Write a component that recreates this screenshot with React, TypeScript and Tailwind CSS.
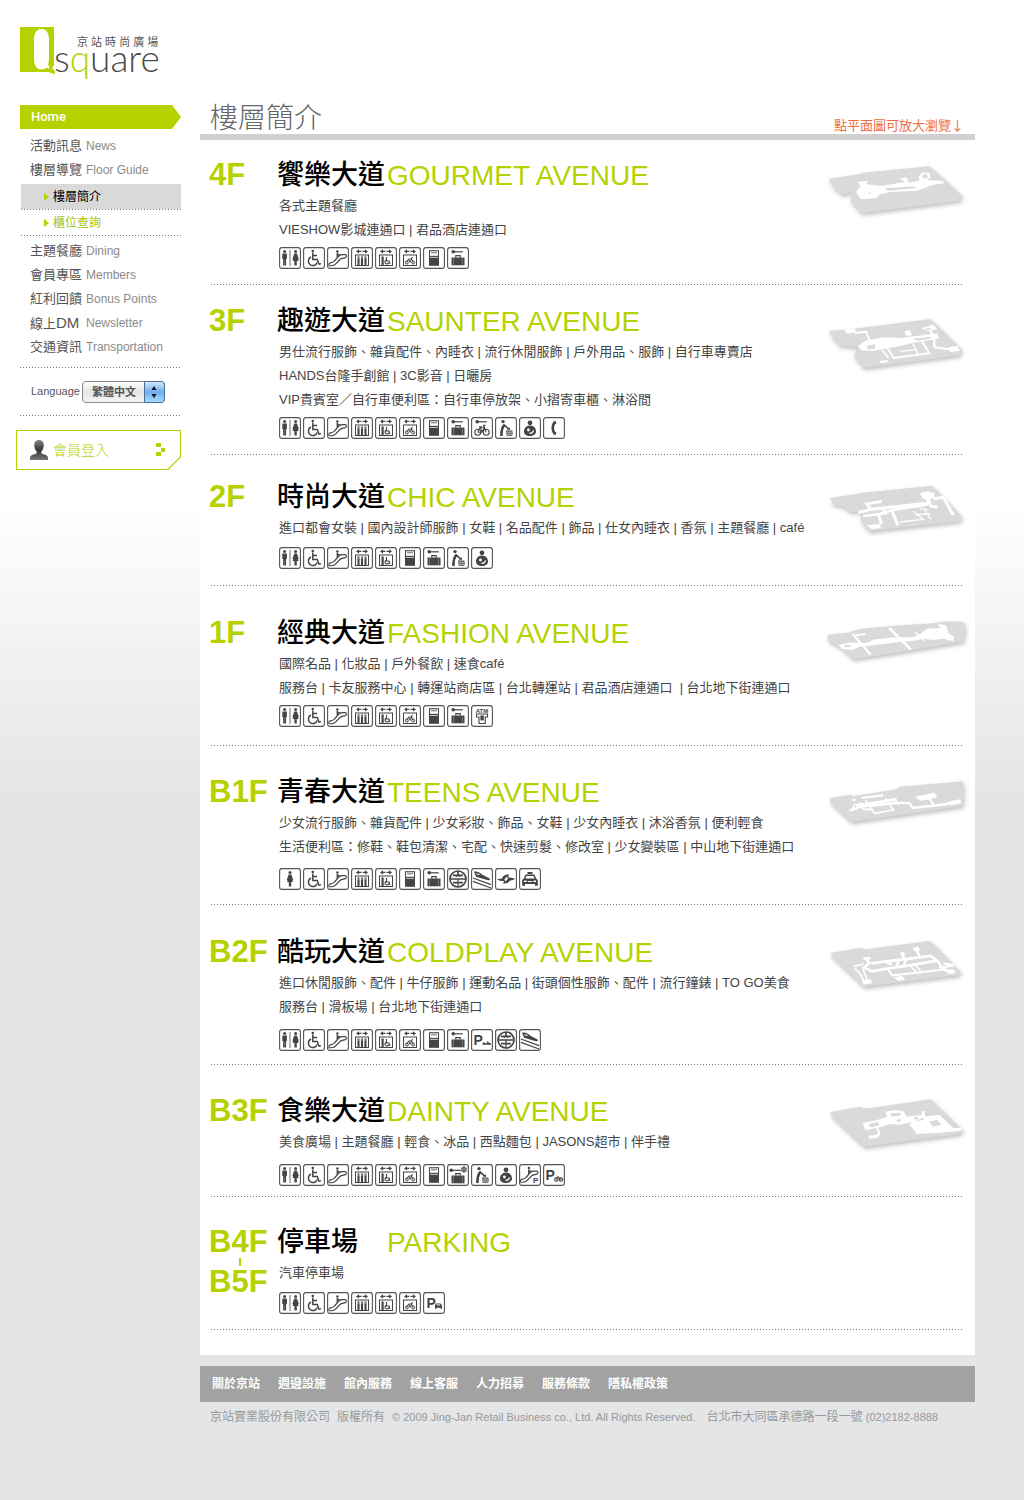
import React from "react";

type IconName =
  | "restroom" | "women" | "wheelchair" | "escalator" | "elevator" | "elevatorAccess" | "elevatorStroller"
  | "locker" | "luggage" | "bike" | "diaper" | "nursing" | "phone" | "atm" | "metro" | "hsr" | "rail"
  | "taxi" | "pMoto" | "coldLuggage" | "escalatorP" | "pBike" | "pCar";

const INK = "#444";

const Man = ({ x }: { x: number }) => (
  <g transform={`translate(${x} 0)`} fill={INK}>
    <circle cx="0" cy="4.6" r="1.5" />
    <path d="M-2.3 6.6H2.3V12H1.5V18.6H.1V13H-.1V18.6H-1.5V12H-2.3Z" />
  </g>
);

const Woman = ({ x }: { x: number }) => (
  <g transform={`translate(${x} 0)`} fill={INK}>
    <circle cx="0" cy="4.6" r="1.5" />
    <path d="M-1.4 6.5H1.4L3.2 12 2.4 12.3 3 14H1.2V18.6H-1.2V14H-3L-2.4 12.3-3.2 12Z" />
  </g>
);

const LiftArrows = () => (
  <path d="M5 4.4L8 2.2V3.7H10.4V5.1H8V6.600ZM17 4.4L14 2.2V3.7H11.6V5.1H14V6.600Z" fill={INK} />
);

const Case = ({ y = 0 }: { y?: number }) => (
  <g transform={`translate(0 ${y})`}>
    <path d="M4.5 10.5H17.5V18.3H4.5Z" fill={INK} />
    <path d="M8.8 10.5V8.7H13.2V10.5" fill="none" stroke={INK} strokeWidth="1.2" />
    <path d="M6.6 10.5V18.3M15.4 10.5V18.3" stroke="#aaa" strokeWidth=".5" />
  </g>
);

const Key = () => (
  <g stroke={INK} fill={INK}>
    <circle cx="6.2" cy="4.8" r="1.8" stroke="none" />
    <path d="M7 4.8H15.8" strokeWidth="1.2" />
  </g>
);

const EscalatorShape = () => (
  <g>
    <path d="M2.2 18.600C5 19 7.500 18.600 9 16.600L13.200 12.300C14.200 11.400 16 11.300 18.400 10.600C20 9.800 19.600 7.600 18 7.600H15C13.200 7.600 12.400 8.400 11.500 9.400L7.500 14C6.600 15.200 5.500 15.600 3.400 15.800C1.800 16.200 1.600 18 2.200 18.600" fill="none" stroke={INK} strokeWidth="1.2" />
    <circle cx="10.400" cy="4.500" r="1.200" fill={INK} />
    <path d="M10.400 6V10.500M10.400 7.500L13 8" stroke={INK} strokeWidth="1.600" />
  </g>
);

const Bike = () => (
  <g fill="none" stroke={INK} strokeWidth="1.1">
    <circle cx="6.8" cy="15.2" r="3" />
    <circle cx="15.2" cy="15.2" r="3" />
    <path d="M6.8 15.2L9.3 10.2H13.4L11 15.2H6.8M9.5 10.2L11 15.2M12.5 8.3L15.2 15.2M8 9.8H10.5M12 8.3H14.6" />
  </g>
);

const Letter = ({ x, y, size }: { x: number; y: number; size: number }) => (
  <text x={x} y={y} fontSize={size} fontWeight="700" fontFamily="Liberation Sans, sans-serif" fill={INK}>P</text>
);

const glyphs: Record<IconName, React.ReactNode> = {
  restroom: (
    <>
      <Man x={5.6} />
      <path d="M11 3V19" stroke={INK} strokeWidth=".8" />
      <Woman x={16.6} />
    </>
  ),
  women: <Woman x={11} />,
  wheelchair: (
    <g fill="none" stroke={INK} strokeWidth="1.5">
      <circle cx="9.8" cy="4" r="1.3" fill={INK} stroke="none" />
      <path d="M9.8 5.6V12.5H14.3L16 17.2 18 16.6M10 8.6H14" />
      <path d="M8 10A4.5 4.5 0 1 0 14.2 15.4" />
    </g>
  ),
  escalator: <EscalatorShape />,
  elevator: (
    <>
      <LiftArrows />
      <rect x="4.5" y="8" width="13" height="10.5" fill="none" stroke={INK} strokeWidth="1" />
      <path d="M7.5 9.5V18M11 9.5V18M14.5 9.5V18" stroke={INK} strokeWidth="2.1" />
      <path d="M6 11H16" stroke="#fff" strokeWidth=".5" />
    </>
  ),
  elevatorAccess: (
    <>
      <LiftArrows />
      <rect x="4.5" y="8" width="13" height="10.5" fill="none" stroke={INK} strokeWidth="1" />
      <path d="M7.6 9.5V18" stroke={INK} strokeWidth="2.2" />
      <path d="M11.5 10V14H14L15 17M11 13.2A2 2 0 1 0 13.8 15.8" fill="none" stroke={INK} strokeWidth="1.1" />
    </>
  ),
  elevatorStroller: (
    <>
      <LiftArrows />
      <rect x="4.5" y="8" width="13" height="10.5" fill="none" stroke={INK} strokeWidth="1" />
      <g fill="none" stroke={INK} strokeWidth="1">
        <circle cx="7.8" cy="15.5" r="1.5" />
        <circle cx="14.2" cy="15.5" r="1.5" />
        <path d="M7.8 15.5L9.5 12H12.6L14.2 15.5M9.5 12L11 15.3L12.6 12V10.8H14" />
      </g>
    </>
  ),
  locker: (
    <>
      <rect x="6" y="3.2" width="10" height="15.6" fill={INK} />
      <path d="M7 4.3H15V8.8H7Z" fill="#fff" />
      <path d="M8 5.8H14" stroke={INK} strokeWidth=".8" />
      <path d="M7 10.4H15" stroke="#fff" strokeWidth=".7" />
    </>
  ),
  luggage: (
    <>
      <Key />
      <Case />
    </>
  ),
  bike: (
    <>
      <Key />
      <Bike />
    </>
  ),
  diaper: (
    <g fill="none" stroke={INK}>
      <circle cx="8" cy="4.600" r="1.700" fill={INK} stroke="none" />
      <path d="M9.500 8C7 10 6.400 13 6.400 19" strokeWidth="2.600" />
      <path d="M9 7.600L13.500 12" strokeWidth="1.500" />
      <path d="M11 14.200H17.500M11 16.200H18M11.500 18.200H17.500" strokeWidth="1.200" />
      <path d="M12.500 11.800H15" strokeWidth="2" />
    </g>
  ),
  nursing: (
    <>
      <circle cx="11" cy="5.8" r="2.4" fill={INK} />
      <path d="M11 8.4C6.8 8.4 4.8 11.8 5 14.8C5.2 17.8 8 19 11 19S16.8 17.6 17 14.8C17.1 11.8 15.2 8.4 11 8.4Z" fill={INK} />
      <circle cx="9.4" cy="13" r="1.4" fill="#fff" />
      <path d="M10.5 15.8C12 17 14 15.6 14.6 13.4" stroke="#fff" strokeWidth="1.3" fill="none" />
    </>
  ),
  phone: <path d="M12.6 4L10.6 4.6C7.8 8.4 7.8 13.6 10.6 17.4L12.6 18L13.4 15.6L11.8 14.6C10.9 12.3 10.9 9.7 11.8 7.4L13.4 6.4Z" fill={INK} />,
  atm: (
    <>
      <text x="11" y="7.6" textAnchor="middle" fontSize="6" fontWeight="700" fontFamily="Liberation Sans, sans-serif" fill={INK}>ATM</text>
      <path d="M5.5 9H16.5V12H14.2V18.5H8V12H5.5Z" fill="none" stroke={INK} strokeWidth="1.1" />
      <path d="M9.4 10.5H12.8V15.4H9.4Z" fill={INK} />
    </>
  ),
  metro: (
    <g fill="none" stroke={INK} strokeWidth="1.7">
      <circle cx="11" cy="11" r="8" />
      <path d="M3 11H19M6 7.4H9.5V9M16 7.4H12.5V9M11 3V8M6 14.6H16" />
      <path d="M11 11V19" strokeWidth="1.2" />
    </g>
  ),
  hsr: (
    <g fill={INK}>
      <path d="M3 3.5C7 3 9 4.500 11 6.400L18.600 10.600C19.600 11.600 18.600 12.400 17 12.200L5 8.800Z" />
      <path d="M5 5.4L8.2 5.800 9 7 5.6 6.4Z" fill="#fff" />
      <path d="M2 10L20 16.600M2 13.4L20 20" stroke={INK} strokeWidth="1.2" />
    </g>
  ),
  rail: (
    <g fill={INK}>
      <path d="M1.8 11.2L7 10.6C7.8 7.6 10.6 6.2 14.2 6.6L13 9.2C16 9.6 18 10 20.2 10.8C18 12.4 16 12.6 14.8 12.6C13.8 15 11 16 8 15.4L9 13C6 13 4 12.6 1.8 11.2Z" />
      <path d="M9.3 11.5L11.8 8.6 13 10.6 10.6 13.4Z" fill="#fff" />
    </g>
  ),
  taxi: (
    <g fill={INK}>
      <path d="M8.5 4H13.5V6H8.5Z" />
      <path d="M6.6 6.6H15.4L17.2 10.6 18.8 12V17.8H16V16H6V17.8H3.2V12L4.8 10.6Z" />
      <path d="M7.4 8H14.6L15.6 10.6H6.4Z" fill="#fff" />
      <path d="M5 12.6H7.6V14H5ZM14.4 12.6H17V14H14.4ZM8.8 13H13.2V14H8.8Z" fill="#fff" />
    </g>
  ),
  pMoto: (
    <>
      <Letter x={2.5} y={15.5} size={14} />
      <path d="M11.500 15H20M12.500 13.500L14 15M16 12.8L18.6 15" stroke={INK} strokeWidth="1.5" />
    </>
  ),
  coldLuggage: (
    <>
      <g transform="translate(-2 1.5)"><Key /></g>
      <Case y={1} />
      <g stroke={INK} strokeWidth=".9" fill="none">
        <circle cx="17" cy="5.5" r="2.2" />
        <path d="M17 2V9M13.8 3.8L20.2 7.2M20.2 3.8L13.8 7.2" />
      </g>
    </>
  ),
  escalatorP: (
    <>
      <g transform="translate(-.5 -.5)"><EscalatorShape /></g>
      <rect x="13" y="12" width="7" height="8" fill="#fff" />
      <Letter x={14} y={19} size={8} />
    </>
  ),
  pBike: (
    <>
      <Letter x={2.5} y={15.5} size={14} />
      <g fill="none" stroke={INK} strokeWidth="1.1">
        <circle cx="13.4" cy="15.6" r="1.7" />
        <circle cx="18" cy="15.6" r="1.7" />
        <path d="M13.4 15.6L15 12.6 18 15.6" />
      </g>
    </>
  ),
  pCar: (
    <>
      <Letter x={3.5} y={15.5} size={14} />
      <path d="M12 16.8V13.2L13 11.4H17.5L19 13.2V16.8H17.4V15.8H13.6V16.8Z" fill={INK} />
      <path d="M13.6 12.4H17.2V13.4H13.6Z" fill="#fff" />
    </>
  ),
};

const labels: Record<IconName, string> = {
  restroom: "洗手間", women: "女用洗手間", wheelchair: "無障礙設施", escalator: "手扶梯", elevator: "電梯",
  elevatorAccess: "無障礙電梯", elevatorStroller: "自行車電梯", locker: "販賣機", luggage: "置物櫃", bike: "自行車櫃",
  diaper: "尿布檯", nursing: "哺乳室", phone: "電話", atm: "提款機", metro: "捷運", hsr: "高鐵", rail: "台鐵",
  taxi: "計程車", pMoto: "機車停車", coldLuggage: "冷藏置物櫃", escalatorP: "停車場手扶梯", pBike: "自行車停車", pCar: "汽車停車",
};

function Facility({ name }: { name: IconName }) {
  return (
    <li>
      <svg viewBox="0 0 22 22" className="block size-[22px]" role="img" aria-label={labels[name]}>
        <rect x=".6" y=".6" width="20.8" height="20.8" rx="2.4" fill="#fff" stroke="#555" strokeWidth="1.1" />
        {glyphs[name]}
      </svg>
    </li>
  );
}

interface Plan {
  y: number;
  outline: string;
  fill: string;
  holes?: string;
  lines: [string, number][];
}

function FloorPlan({ plan, floor }: { plan: Plan; floor: string }) {
  return (
    <button type="button" aria-label={`${floor} 平面圖`} className="block shrink-0 cursor-pointer self-start">
      <svg viewBox={`75 ${plan.y} 435 210`} className="block h-[70px] w-[145px]">
        <path d={plan.outline} className="fill-[#d9dadb] drop-shadow-[3px_7px_6px_rgba(0,0,0,0.25)]" />
        <path d={plan.fill} fill="#fff" />
        {plan.holes && <path d={plan.holes} fill="#d9dadb" />}
        {plan.lines.map(([d, w]) => (
          <path key={d} d={d} fill="none" stroke="#fff" strokeWidth={w} />
        ))}
      </svg>
    </button>
  );
}

interface Floor {
  id: string[];
  zh: string;
  en: string;
  desc: string[];
  icons: IconName[];
  pad: string;
  iconGap: string;
  plan?: Plan;
}

const base: IconName[] = ["restroom", "wheelchair", "escalator", "elevator", "elevatorAccess"];

const floors: Floor[] = [
  {
    id: ["4F"], zh: "饗樂大道", en: "GOURMET AVENUE",
    desc: ["各式主題餐廳", "VIESHOW影城連通口 | 君品酒店連通口"],
    icons: [...base, "elevatorStroller", "locker", "luggage"],
    pad: "pt-[19px] pb-[15px]", iconGap: "mt-[5px]",
    plan: {
      y: 177,
      outline: "M86 236L180 222L190 218L388 199L405 212L487 288L478 302L185 340L152 304L156 276L128 284L105 268Z",
      fill: "M182 260L172 246L204 242L200 253L245 258L300 248L316 248L300 235L320 232L326 248L358 242L356 232L366 218L388 218L392 232L380 240L430 243L432 250L400 254L352 272L270 276L236 284L230 294L182 298L168 276Z",
      holes: "M255 265L340 259L350 264L262 272ZM368 224L380 222L384 232L370 236ZM206 278L212 277L213 281L207 282Z",
      lines: [],
    },
  },
  {
    id: ["3F"], zh: "趣遊大道", en: "SAUNTER AVENUE",
    desc: ["男仕流行服飾、雜貨配件、內睡衣 | 流行休閒服飾 | 戶外用品、服飾 | 自行車專賣店", "HANDS台隆手創館 | 3C影音 | 日曬房", "VIP貴賓室／自行車便利區：自行車停放架、小摺寄車櫃、淋浴間"],
    icons: [...base, "elevatorStroller", "locker", "luggage", "bike", "diaper", "nursing", "phone"],
    pad: "pt-[20px] pb-[15px]", iconGap: "mt-[5px]",
    plan: {
      y: 615,
      outline: "M86 693L180 684L390 657L408 672L486 750L478 766L192 804L162 770L172 742L118 736L98 712Z",
      fill: "M132 689L164 685L168 697L142 701ZM312 694L330 690L336 706L320 708ZM364 684L400 674L412 688L384 694ZM446 742L472 737L480 752L452 756ZM240 782L262 780L266 786L242 790ZM174 738L196 722L250 712L300 714L412 700L416 716L340 728L290 740L220 752L186 752Z",
      holes: "M200 738L226 732L224 746L204 748ZM340 716L392 710L392 716L350 722ZM376 686L390 683L393 688L380 691Z",
      lines: [["M165 699L198 695L210 724", 6], ["M262 744L282 774L388 760L366 724", 6], ["M244 748L266 774", 5], ["M300 754L352 748M338 730L356 766", 4], ["M392 692L402 716L404 742L450 748", 7]],
    },
  },
  {
    id: ["2F"], zh: "時尚大道", en: "CHIC AVENUE",
    desc: ["進口都會女裝 | 國內設計師服飾 | 女鞋 | 名品配件 | 飾品 | 仕女內睡衣 | 香氛 | 主題餐廳 | café"],
    icons: [...base, "locker", "luggage", "diaper", "nursing"],
    pad: "pt-[26px] pb-[16px]", iconGap: "mt-[7px]",
    plan: {
      y: 33,
      outline: "M90 84L190 68L396 47L410 60L488 142L478 154L208 184L182 152L184 124L150 126L128 108L102 106Z",
      fill: "M360 70L384 64L404 70L400 84L378 90L366 84ZM200 166L238 162L244 174L214 178Z",
      lines: [["M174 128L214 118L382 100L388 84", 9], ["M190 138L240 132L278 120L382 104", 8], ["M214 120L200 102L246 94", 8], ["M384 82L392 108L412 112", 9], ["M400 86L430 82L460 136", 9], ["M246 114L260 134", 7], ["M276 122L294 166", 9], ["M236 136L244 162", 9], ["M340 124L370 148L300 156", 4], ["M346 134L390 132M374 120L392 148M360 116L382 118", 4]],
    },
  },
  {
    id: ["1F"], zh: "經典大道", en: "FASHION AVENUE",
    desc: ["國際名品 | 化妝品 | 戶外餐飲 | 速食café", "服務台 | 卡友服務中心 | 轉運站商店區 | 台北轉運站 | 君品酒店連通口  | 台北地下街連通口"],
    icons: [...base, "elevatorStroller", "locker", "luggage", "atm"],
    pad: "pt-[31px] pb-[18px]", iconGap: "mt-[5px]",
    plan: {
      y: 441,
      outline: "M82 494L145 488L180 477L300 466L400 460L440 454L492 456L496 480L490 500L496 514L340 540L160 568L118 530L84 512Z",
      fill: "M116 524L150 518L200 518L226 508L284 502L340 502L366 488L380 476L420 474L414 462L438 466L446 490L462 500L460 514L430 506L400 510L372 506L340 512L280 518L232 524L180 530L156 540L124 536Z",
      holes: "M132 526L150 524L152 530L136 532Z",
      lines: [["M268 474L332 538", 8], ["M158 492L212 554", 7], ["M166 496L196 492", 6], ["M346 486L372 512", 4]],
    },
  },
  {
    id: ["B1F"], zh: "青春大道", en: "TEENS AVENUE",
    desc: ["少女流行服飾、雜貨配件 | 少女彩妝、飾品、女鞋 | 少女內睡衣 | 沐浴香氛 | 便利輕食", "生活便利區：修鞋、鞋包清潔、宅配、快速剪髮、修改室 | 少女變裝區 | 中山地下街連通口"],
    icons: ["women", "wheelchair", "escalator", "elevator", "elevatorAccess", "locker", "luggage", "metro", "hsr", "rail", "taxi"],
    pad: "pt-[30px] pb-[14px]", iconGap: "mt-[9px]",
    plan: {
      y: 918,
      outline: "M90 984L150 974L160 978L290 958L300 950L488 934L492 960L488 1008L300 1036L154 1056L92 998Z",
      fill: "M346 980L404 968L412 982L390 988L360 992ZM440 996L480 988L484 1000L450 1006ZM154 988L166 986L168 992L158 994Z",
      lines: [["M184 984L250 976", 6], ["M168 1006L212 1000L290 988", 8], ["M148 1022L184 1010L300 998L330 1000L338 1014L444 1002", 7], ["M196 990L224 1030L280 1020L256 984", 5], ["M208 1008L284 1000M280 984L296 1004", 6], ["M166 1000L156 1018M180 996L190 1018L216 1018", 5], ["M388 986L402 1006", 6]],
    },
  },
  {
    id: ["B2F"], zh: "酷玩大道", en: "COLDPLAY AVENUE",
    desc: ["進口休閒服飾、配件 | 牛仔服飾 | 運動名品 | 街頭個性服飾、配件 | 流行鐘錶 | TO GO美食", "服務台 | 滑板場 | 台北地下街連通口"],
    icons: [...base, "elevatorStroller", "locker", "luggage", "pMoto", "metro", "hsr"],
    pad: "pt-[31px] pb-[13px]", iconGap: "mt-[10px]",
    plan: {
      y: 48,
      outline: "M92 98L180 84L196 88L388 63L404 74L484 158L474 166L192 200L94 108Z",
      fill: "M338 84L356 80L360 92L344 94ZM300 98L312 96L316 106L304 108ZM188 112L212 110L212 118L192 120ZM186 180L212 178L216 190L190 194ZM280 172L306 168L316 178L296 184ZM438 150L462 148L466 160L446 162Z",
      lines: [["M200 118L208 130L192 142L216 154L260 146L330 136L410 122L392 108L330 116L260 124L214 130", 8], ["M162 140L190 132M164 146L180 160L192 184M188 146L202 180", 5], ["M264 148L276 166L350 158L440 148", 6], ["M350 92L360 110M308 106L314 120M252 124L276 134M296 122L290 138M320 118L310 138", 7], ["M330 136L350 158M344 132L362 154", 5], ["M410 118L426 142L462 136L430 130M418 140L452 158", 7]],
    },
  },
  {
    id: ["B3F"], zh: "食樂大道", en: "DAINTY AVENUE",
    desc: ["美食廣場 | 主題餐廳 | 輕食、冰品 | 西點麵包 | JASONS超市 | 伴手禮"],
    icons: [...base, "elevatorStroller", "locker", "coldLuggage", "diaper", "nursing", "escalatorP", "pBike"],
    pad: "pt-[30px] pb-[10px]", iconGap: "mt-[10px]",
    plan: {
      y: 525,
      outline: "M92 576L180 560L196 566L392 538L410 554L488 630L480 642L192 680L94 588Z",
      fill: "M328 612L344 604L372 600L368 590L418 584L460 624L486 624L482 632L420 638L350 642ZM256 576L280 570L312 574L318 590L366 584L364 574L374 574L376 590L340 606L300 614L270 612L232 624L196 630L188 608L222 602L262 592Z",
      holes: "M270 580L300 578L304 586L276 590ZM206 612L234 606L238 616L212 622ZM388 604L412 600L424 614L398 620ZM290 600L302 597L304 604L292 606ZM342 592L352 591L354 598L344 600Z",
      lines: [["M232 624L238 642L222 652", 7], ["M206 652L236 648", 9]],
    },
  },
  {
    id: ["B4F", "B5F"], zh: "停車場", en: "PARKING",
    desc: ["汽車停車場"],
    icons: [...base, "elevatorStroller", "pCar"],
    pad: "pt-[29px] pb-[15px]", iconGap: "mt-[7px]",
  },
];

function Dots({ className }: { className: string }) {
  return <div className={`h-px bg-[repeating-linear-gradient(90deg,#777_0_1px,transparent_1px_3px)] ${className}`} />;
}

function FloorSection({ floor }: { floor: Floor }) {
  return (
    <section>
      <div className={`flex pr-[5px] pl-[9px] ${floor.pad}`}>
        <div className="w-[68px] shrink-0 text-[31px] leading-8 font-bold text-[#b5d200]">
          {floor.id.map((id, i) => (
            <React.Fragment key={id}>
              {i > 0 && <div className="ml-[30px] h-2 w-[2px] bg-[#b5d200]" />}
              <div>{id}</div>
            </React.Fragment>
          ))}
        </div>
        <div className="min-w-0 flex-1">
          <h2 className="flex leading-8 whitespace-nowrap">
            <span className="w-[110px] text-[27px] font-medium text-black">{floor.zh}</span>
            <span className="text-[28px] leading-[34px] text-[#b5d200]">{floor.en}</span>
          </h2>
          <div className="mt-px pl-[2px] text-[13px] leading-6 text-[#444]">
            {floor.desc.map((line) => (
              <p key={line} className="whitespace-pre-wrap">{line}</p>
            ))}
          </div>
          <ul className={`flex gap-[2px] pl-[2px] ${floor.iconGap}`}>
            {floor.icons.map((name) => (
              <Facility key={name} name={name} />
            ))}
          </ul>
        </div>
        {floor.plan && <FloorPlan plan={floor.plan} floor={floor.id[0]} />}
      </div>
      <Dots className="mr-3 ml-[11px]" />
    </section>
  );
}

function NavItem({ zh, latin, en }: { zh: string; latin?: string; en: string }) {
  return (
    <li>
      <a href="#" className="flex h-6 items-center pl-[10px] text-[13px] leading-6">
        <span className="w-14 text-[#555]">
          {zh}
          {latin && <span className="text-[15px]">{latin}</span>}
        </span>
        <span className="text-xs leading-6 text-[#8a8a8a]">{en}</span>
      </a>
    </li>
  );
}

function SubItem({ text, active }: { text: string; active?: boolean }) {
  return (
    <li>
      <a
        href="#"
        className={`flex h-[25px] items-center gap-1 pl-[23px] text-xs ${active ? "bg-[#d9d9d9] text-black" : "text-[#a9c400]"}`}
      >
        <svg viewBox="0 0 5 8" className="h-2 w-[5px]"><path d="M0 0L5 4 0 8Z" fill="#b5d200" /></svg>
        {text}
      </a>
      <Dots className="" />
    </li>
  );
}

function Logo() {
  return (
    <a href="#" aria-label="Qsquare 京站時尚廣場" className="block w-[145px]">
      <svg viewBox="0 0 145 56" className="block h-14 w-[145px]">
        <path d="M0 0H34V38L32 41L35 44V47L31 46L29 45H0Z" fill="#b5d200" />
        <path d="M21.5 2C16.5 2 14 6 14 13V31C14 38.500 16.500 42.500 21.500 42.500C24 42.500 25.500 41.800 26.500 40.600L28.500 42L29.500 39.500L28 37.800C28.700 36 29 34 29 31V13C29 6 26.500 2 21.500 2Z" fill="#fff" />
        <text x="57" y="19" fontSize="11" fill="#555" fontFamily="Liberation Sans, Noto Sans CJK TC, sans-serif">京 站 時 尚 廣 場</text>
        <text x="34" y="45" fontSize="37" fontWeight="300" fill="#4a4a4a" fontFamily="Lato, sans-serif">
          s<tspan fill="#b5d200">q</tspan>uare
        </text>
      </svg>
    </a>
  );
}

function Sidebar() {
  return (
    <aside className="w-[200px] shrink-0 pt-[27px] pr-[19px] pl-5">
      <Logo />
      <nav className="mt-[22px]">
        <a
          href="#"
          className="flex h-6 items-center bg-[#b5d200] pl-[11px] font-[family-name:Roboto,sans-serif] text-[13px] font-medium text-white [clip-path:polygon(0_0,calc(100%-9px)_0,100%_50%,calc(100%-9px)_100%,0_100%)]"
        >
          Home
        </a>
        <ul className="mt-[5px]">
          <NavItem zh="活動訊息" en="News" />
          <NavItem zh="樓層導覽" en="Floor Guide" />
        </ul>
        <ul className="mt-[2px] ml-px">
          <SubItem text="樓層簡介" active />
          <SubItem text="櫃位查詢" />
        </ul>
        <ul className="mt-[3px]">
          <NavItem zh="主題餐廳" en="Dining" />
          <NavItem zh="會員專區" en="Members" />
          <NavItem zh="紅利回饋" en="Bonus Points" />
          <NavItem zh="線上" latin="DM" en="Newsletter" />
          <NavItem zh="交通資訊" en="Transportation" />
        </ul>
      </nav>
      <Dots className="mt-2" />
      <div className="flex h-[47px] items-center gap-[2px] pl-[11px]">
        <label htmlFor="language" className="text-[11px] text-[#555]">Language</label>
        <div className="relative">
          <select
            id="language"
            className="block h-[22px] w-[83px] appearance-none rounded-[4px] border border-[#8a8a8a] bg-linear-to-b from-white via-[#e4e4e4] to-[#f6f6f6] pl-[9px] text-[11px] leading-5 font-bold text-[#555]"
          >
            <option>繁體中文</option>
          </select>
          <span className="pointer-events-none absolute top-0 right-0 flex h-[22px] w-[21px] items-center justify-center rounded-r-[4px] border border-[#4a6f9c] bg-linear-to-b from-[#d3e8fb] via-[#6eaeec] to-[#a6dcff]">
            <svg viewBox="0 0 6 14" className="h-[14px] w-[6px]"><path d="M3 1L5.500 5H.5ZM3 13L5.500 9H.5Z" fill="#111" /></svg>
          </span>
        </div>
      </div>
      <Dots className="" />
      <button type="button" className="relative mt-[14px] -ml-1 flex h-10 w-[165px] cursor-pointer items-center pl-3 text-[#b5d200]">
        <svg viewBox="0 0 165 40" className="absolute inset-0 h-10 w-[165px]">
          <path d="M.5 .5H164.500V27L152 39.500H.5Z" fill="#fff" stroke="#b5d200" strokeWidth="1.2" />
          <path d="M140 13h5v4h-5zM145 18h4v4h-4zM140 22h5v4h-5z" fill="#b5d200" />
        </svg>
        <svg viewBox="0 0 22 22" className="relative h-[22px] w-[22px]">
          <defs>
            <linearGradient id="person" x1="0" y1="0" x2="0" y2="1">
              <stop offset="0" stopColor="#888" />
              <stop offset=".5" stopColor="#333" />
              <stop offset="1" stopColor="#777" />
            </linearGradient>
          </defs>
          <path d="M11 1C7.500 1 6 3.500 6.300 7C6.500 9.500 7.500 11.500 8.600 12.600V14.500C6 15.500 2.500 15.800 2 18.500V21H20V18.500C19.500 15.800 16 15.500 13.400 14.500V12.600C14.500 11.500 15.500 9.500 15.700 7C16 3.500 14.500 1 11 1Z" fill="url(#person)" />
        </svg>
        <span className="relative ml-[3px] text-[14px] font-light">會員登入</span>
      </button>
    </aside>
  );
}

const footerLinks = ["關於京站", "週邊設施", "館內服務", "線上客服", "人力招募", "服務條款", "隱私權政策"];

export default function App() {
  return (
    <div lang="zh-Hant" className="flex min-h-screen bg-[#e3e5e7] bg-[linear-gradient(to_bottom,#fff_500px,#e3e5e7_790px)] font-[family-name:'Liberation_Sans','Noto_Sans_CJK_TC',sans-serif]">
      <Sidebar />
      <div className="mr-[49px] min-w-0 flex-1">
        <main className="bg-white pb-[25px]">
          <header className="flex items-end justify-between border-b-[6px] border-[#d0d0d0] pt-[104px] pr-[11px] pl-[10px]">
            <h1 className="text-[28px] leading-[30px] font-light text-[#666]">樓層簡介</h1>
            <p className="font-[family-name:'Noto_Sans_CJK_TC',sans-serif] text-[13px] leading-[18px] text-[#f26b43]">點平面圖可放大瀏覽↓</p>
          </header>
          {floors.map((floor) => (
            <FloorSection key={floor.zh} floor={floor} />
          ))}
        </main>
        <footer className="mt-[11px]">
          <nav className="flex h-9 items-center gap-[18px] bg-[#a2a2a2] pl-3 text-xs font-bold text-white">
            {footerLinks.map((text) => (
              <a key={text} href="#">{text}</a>
            ))}
          </nav>
          <div className="mt-[3px] flex gap-[7px] pl-[10px] text-xs leading-6 whitespace-nowrap text-[#999]">
            <span>京站實業股份有限公司</span>
            <span>版權所有</span>
            <span className="text-[11px] leading-6">© 2009 Jing-Jan Retail Business co., Ltd. All Rights Reserved.</span>
            <span className="ml-1">
              台北市大同區承德路一段一號 <span className="text-[11px]">(02)2182-8888</span>
            </span>
          </div>
        </footer>
      </div>
    </div>
  );
}
